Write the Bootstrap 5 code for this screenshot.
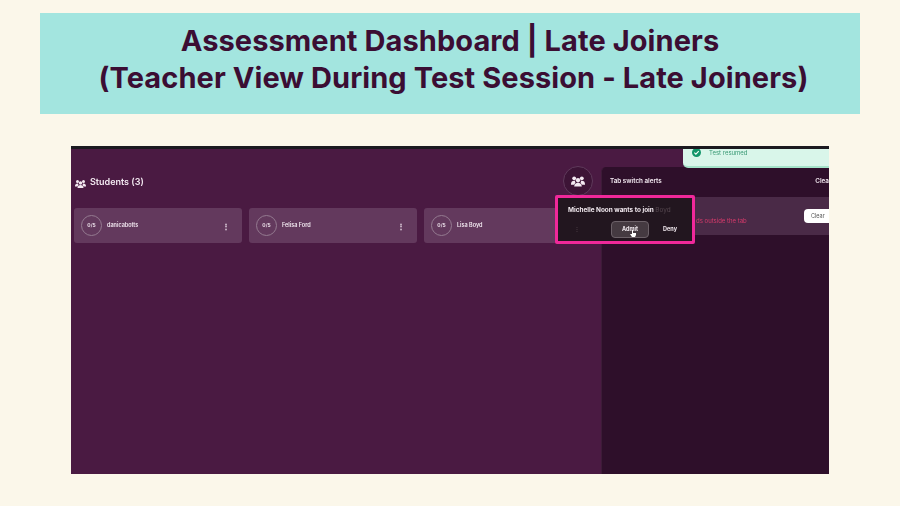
<!DOCTYPE html>
<html lang="en">
<head>
    <meta charset="UTF-8">
    <meta name="viewport" content="width=device-width, initial-scale=1.0">
    <title>Assessment Dashboard | Late Joiners</title>
    <link href="https://cdn.jsdelivr.net/npm/bootstrap@5.3.2/dist/css/bootstrap.min.css" rel="stylesheet">
    <style>
        body {
            background-color: #fbf7ea;
            font-family: "Inter", "Liberation Sans", sans-serif;
            padding: 13px 40px 0;
        }
        .title-banner {
            height: 101px;
            background-color: #a3e5df;
            color: #3b0e33;
            font-size: 29px;
            font-weight: 700;
            line-height: 37px;
            letter-spacing: .08px;
            padding-top: 9px;
        }
        .video-frame {
            position: relative;
            width: 758px;
            height: 328px;
            margin: 32px 0 0 31px;
            background-color: #4a1a42;
            border-top: 3px solid #1b1a20;
            color: #f3e9f1;
            overflow: hidden;
            filter: blur(.3px);
        }
        .main-area {
            width: 530px;
            padding: 0 9px 0 3px;
        }
        .students-head {
            height: 59px;
            padding-top: 26px;
            padding-left: 1px;
            font-size: 9px;
            font-weight: 600;
        }
        .student-tile {
            flex: 0 0 168px;
            height: 35px;
            padding: 0 12px 0 7px;
            background-color: #63395d;
            border-radius: 3px;
            font-size: 5.5px;
            font-weight: 600;
        }
        .student-name {
            margin-left: 5px;
        }
        .tile-row {
            gap: 7px;
        }
        .score-ring {
            width: 21px;
            height: 21px;
            border: 1px solid #947a90;
            border-radius: 50%;
            font-size: 5px;
        }
        .dots-v {
            font-size: 8px;
            font-weight: 700;
        }
        .alerts-panel {
            width: 228px;
            margin-top: 18px;
            background-color: #2e0f2a;
            border-left: 1px solid #3d1b38;
            border-radius: 5px 0 0 0;
        }
        .alerts-head {
            height: 30px;
            padding-left: 8px;
            font-size: 6.3px;
            font-weight: 600;
        }
        .alert-row {
            height: 38px;
            background-color: #4a2a47;
            font-size: 6px;
            color: #d83a6b;
            padding-left: 94px;
        }
        .alert-msg {
            margin-top: 9px;
        }
        .clear-pill {
            background-color: #fff;
            color: #555;
            font-size: 5.5px;
            padding: 3px 0 3px 7px;
            width: 25px;
            border-radius: 4px 0 0 4px;
            overflow: hidden;
        }
        .group-circle {
            position: absolute;
            left: 492px;
            top: 17px;
            width: 30px;
            height: 30px;
            border: 1px solid #5f3a5b;
            border-radius: 50%;
            background-color: #3d1436;
        }
        .toast-box {
            position: absolute;
            right: 0;
            top: -3px;
            width: 146px;
            height: 22px;
            background-color: #d9f6ea;
            border-bottom: 2px solid #a5e3c9;
            border-radius: 0 0 0 5px;
            color: #3a9a75;
            font-size: 6px;
            padding: 0 0 7px 9px;
        }
        .toast-check {
            width: 9px;
            height: 9px;
        }
        .join-popup {
            position: absolute;
            left: 484px;
            top: 46px;
            width: 140px;
            height: 49px;
            background-color: #22161f;
            border: 3px solid #f0289a;
            border-radius: 2px;
            padding: 8px 10px;
            font-size: 6.4px;
            font-weight: 700;
            color: #f1e9ef;
        }
        .ghost-text {
            color: #55474f;
            font-weight: 400;
        }
        .join-actions {
            margin-top: 5px;
            padding: 0 5px 0 6px;
            font-size: 5.5px;
        }
        .faint-dots {
            width: 37px;
            color: #4a3d45;
        }
        .admit-btn {
            position: relative;
            width: 38px;
            height: 17px;
            background-color: #453a41;
            border: 1px solid #6c6168;
            border-radius: 4px;
        }
        .cursor-hand {
            position: absolute;
            left: 18px;
            top: 8px;
            width: 6px;
            height: 7px;
        }
    </style>
</head>
<body>
    <div class="title-banner text-center">
        Assessment Dashboard | Late Joiners<br>
        &nbsp;(Teacher View During Test Session - Late Joiners)
    </div>

    <div class="video-frame d-flex">
        <div class="main-area">
            <div class="students-head d-flex align-items-start gap-1">
                <svg width="11" height="10" viewBox="0 0 22 20" fill="#f3e9f1" class="mt-1"><circle cx="5" cy="5" r="3"/><circle cx="17" cy="5" r="3"/><circle cx="11" cy="8" r="3.4"/><path d="M0 14c0-3 2-5 5-5h1l1 3-2 3H0zM22 14c0-3-2-5-5-5h-1l-1 3 2 3h5zM5 18c0-4 3-6 6-6s6 2 6 6z"/></svg>
                <span>Students (3)</span>
            </div>
            <div class="tile-row d-flex">
                <div class="student-tile d-flex align-items-center">
                    <div class="score-ring d-flex align-items-center justify-content-center">0/5</div>
                    <span class="student-name flex-grow-1">danicabotts</span>
                    <span class="dots-v">⋮</span>
                </div>
                <div class="student-tile d-flex align-items-center">
                    <div class="score-ring d-flex align-items-center justify-content-center">0/5</div>
                    <span class="student-name flex-grow-1">Felisa Ford</span>
                    <span class="dots-v">⋮</span>
                </div>
                <div class="student-tile d-flex align-items-center">
                    <div class="score-ring d-flex align-items-center justify-content-center">0/5</div>
                    <span class="student-name flex-grow-1">Lisa Boyd</span>
                </div>
            </div>
        </div>
        <div class="alerts-panel flex-grow-1">
            <div class="alerts-head d-flex justify-content-between align-items-center">
                <span>Tab switch alerts</span>
                <span class="clear-text">Clea</span>
            </div>
            <div class="alert-row d-flex justify-content-between align-items-center">
                <span class="alert-msg">ds outside the tab</span>
                <span class="clear-pill">Clear</span>
            </div>
        </div>

        <div class="group-circle d-flex align-items-center justify-content-center">
            <svg width="14" height="13" viewBox="0 0 22 20" fill="#f3e9f1"><circle cx="5" cy="5" r="3"/><circle cx="17" cy="5" r="3"/><circle cx="11" cy="8" r="3.4"/><path d="M0 14c0-3 2-5 5-5h1l1 3-2 3H0zM22 14c0-3-2-5-5-5h-1l-1 3 2 3h5zM5 18c0-4 3-6 6-6s6 2 6 6z"/></svg>
        </div>

        <div class="toast-box d-flex align-items-center gap-2">
            <svg class="toast-check" viewBox="0 0 10 10"><circle cx="5" cy="5" r="5" fill="#12966a"/><path d="M2.6 5.2l1.7 1.7 3.2-3.4" fill="none" stroke="#fff" stroke-width="1.2"/></svg>
            <span>Test resumed</span>
        </div>

        <div class="join-popup">
            <div>Michelle Noon wants to join <span class="ghost-text">Boyd</span></div>
            <div class="join-actions d-flex align-items-center">
                <span class="faint-dots">⋮</span>
                <div class="admit-btn d-flex align-items-center justify-content-center">
                    Admit
                    <svg class="cursor-hand" viewBox="0 0 6 7"><path d="M2 0h1v3h3v2L5 7H2L0 4h2z" fill="#fff"/></svg>
                </div>
                <span class="ms-auto">Deny</span>
            </div>
        </div>
    </div>
</body>
</html>
